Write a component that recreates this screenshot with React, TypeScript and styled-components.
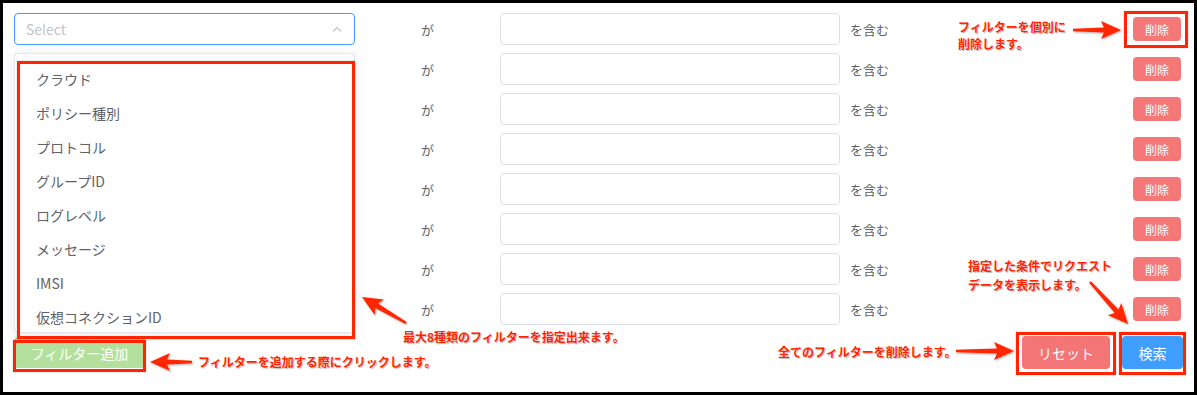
import React from 'react';
import styled, { createGlobalStyle } from 'styled-components';

const GlobalStyle = createGlobalStyle`
	body {
		margin: 0;
		background: #fff;
		font-family: 'Noto Sans CJK JP', 'Noto Sans', sans-serif;
	}
`;

const Frame = styled.div`
	position: relative;
	box-sizing: border-box;
	width: 1197px;
	height: 395px;
	border: 3px solid #000;
	padding: 10px 13px 0 11px;
	background: #fff;
	color: #606266;
`;

const FilterList = styled.div`
	display: flex;
	flex-direction: column;
	gap: 8px;
`;

const FilterRow = styled.div`
	display: flex;
	align-items: center;
	height: 32px;
`;

const SelectBox = styled.div<{ $focus?: boolean }>`
	box-sizing: border-box;
	width: 341px;
	height: 32px;
	display: flex;
	align-items: center;
	justify-content: space-between;
	padding: 0 12px 0 11px;
	border: 1px solid ${p => (p.$focus ? '#409eff' : '#dcdfe6')};
	border-radius: 4px;
	font-size: 14px;
	color: #c0c4cc;
`;

const Ga = styled.span`
	width: 145px;
	text-align: center;
	font-size: 13px;
	color: #606266;
`;

const TextInput = styled.div`
	box-sizing: border-box;
	width: 340px;
	height: 32px;
	border: 1px solid #dcdfe6;
	border-radius: 4px;
	background: #fff;
`;

const Contains = styled.span`
	margin-left: 10px;
	font-size: 13px;
	color: #606266;
	flex: 1;
`;

const Btn = styled.button<{ $color: string; $w: number; $h: number; $size?: number }>`
	box-sizing: border-box;
	width: ${p => p.$w}px;
	height: ${p => p.$h}px;
	border: none;
	border-radius: 4px;
	background: ${p => p.$color};
	color: #fff;
	font-family: inherit;
	font-size: ${p => p.$size || 14}px;
	padding: 0;
	cursor: pointer;
`;

const BottomBar = styled.div`
	display: flex;
	align-items: center;
	justify-content: space-between;
	margin-top: 11px;
	margin-right: -2px;
`;

const ButtonGroup = styled.div`
	display: flex;
	gap: 12px;
`;

const Dropdown = styled.ul`
	position: absolute;
	left: 11px;
	top: 50px;
	box-sizing: border-box;
	width: 341px;
	height: 280px;
	margin: 0;
	padding: 8px 0 0;
	list-style: none;
	background: #fff;
	border: 1px solid #e4e7ed;
	border-radius: 4px;
	box-shadow: 0 2px 12px rgba(0, 0, 0, 0.1);
	overflow: hidden;

	&::before,
	&::after {
		content: '';
		position: absolute;
		left: 166px;
		border: 6px solid transparent;
		border-top-width: 0;
	}
	&::before {
		top: -7px;
		border-bottom-color: #e4e7ed;
	}
	&::after {
		top: -6px;
		border-bottom-color: #fff;
	}
`;

const Option = styled.li`
	height: 34px;
	line-height: 34px;
	padding: 0 21px;
	font-size: 14px;
	color: #606266;
`;

const Highlight = styled.div<{ $l: number; $t: number; $w: number; $h: number }>`
	position: absolute;
	left: ${p => p.$l}px;
	top: ${p => p.$t}px;
	width: ${p => p.$w}px;
	height: ${p => p.$h}px;
	box-sizing: border-box;
	border: 3px solid #ff2500;
	box-shadow: 0 0 1px rgba(0, 0, 0, 0.35);
	pointer-events: none;
`;

const Note = styled.div<{ $l: number; $t: number; $lh?: number }>`
	position: absolute;
	left: ${p => p.$l}px;
	top: ${p => p.$t}px;
	white-space: pre;
	font-size: 12px;
	font-weight: 700;
	line-height: ${p => p.$lh || 17}px;
	color: #ff2500;
	text-shadow: 0 0 2px #fff, 1px 1px 1px rgba(0, 0, 0, 0.35);
	pointer-events: none;
`;

const ArrowLayer = styled.svg`
	position: absolute;
	left: -3px;
	top: -3px;
	width: 1197px;
	height: 395px;
	pointer-events: none;
	overflow: visible;
`;

function arrowPoints(x1: number, y1: number, x2: number, y2: number): string {
	const dx = x2 - x1;
	const dy = y2 - y1;
	const len = Math.hypot(dx, dy);
	const ux = dx / len;
	const uy = dy / len;
	const nx = -uy;
	const ny = ux;
	const head = 17;
	const bx = x2 - ux * head;
	const by = y2 - uy * head;
	const pts = [
		[x1 + nx * 1.2, y1 + ny * 1.2],
		[bx + nx * 2.6, by + ny * 2.6],
		[bx + nx * 9 - ux * 3, by + ny * 9 - uy * 3],
		[x2, y2],
		[bx - nx * 9 - ux * 3, by - ny * 9 - uy * 3],
		[bx - nx * 2.6, by - ny * 2.6],
		[x1 - nx * 1.2, y1 - ny * 1.2],
	];
	return pts.map(p => p.map(v => v.toFixed(1)).join(',')).join(' ');
}

const arrows: [number, number, number, number][] = [
	[192, 362, 150, 362],
	[406, 323, 362, 297],
	[1073, 30, 1121, 30],
	[956, 351, 1014, 351],
	[1090, 282, 1128, 324],
];

const options = [
	'クラウド',
	'ポリシー種別',
	'プロトコル',
	'グループID',
	'ログレベル',
	'メッセージ',
	'IMSI',
	'仮想コネクションID',
];

function Chevron(): JSX.Element {
	return (
		<svg width="10" height="6" viewBox="0 0 10 6">
			<polyline points="1,5.5 5,1.5 9,5.5" fill="none" stroke="#c0c4cc" strokeWidth="1.2" />
		</svg>
	);
}

export default function App(): JSX.Element {
	return (
		<>
			<GlobalStyle />
			<Frame>
				<FilterList>
					{Array.from({ length: 8 }).map((_, i) => (
						<FilterRow key={i}>
							{/* 2行目以降のセレクトはドロップダウンの下に隠れる */}
							<SelectBox $focus={i === 0}>
								{i === 0 ? 'Select' : ''}
								<Chevron />
							</SelectBox>
							<Ga>が</Ga>
							<TextInput />
							<Contains>を含む</Contains>
							<Btn $color="#f47878" $w={48} $h={24} $size={12}>
								削除
							</Btn>
						</FilterRow>
					))}
				</FilterList>

				<BottomBar>
					<Btn $color="#b3e19d" $w={131} $h={31}>
						フィルター追加
					</Btn>
					<ButtonGroup>
						<Btn $color="#f47575" $w={88} $h={33}>
							リセット
						</Btn>
						<Btn $color="#409eff" $w={61} $h={33}>
							検索
						</Btn>
					</ButtonGroup>
				</BottomBar>

				<Dropdown>
					{options.map(o => (
						<Option key={o}>{o}</Option>
					))}
				</Dropdown>

				{/* 説明用の赤枠・矢印・注釈 */}
				<Highlight $l={14} $t={58} $w={338} $h={278} />
				<Highlight $l={10} $t={337} $w={133} $h={32} />
				<Highlight $l={1121} $t={8} $w={64} $h={37} />
				<Highlight $l={1013} $t={329} $w={100} $h={43} />
				<Highlight $l={1116} $t={329} $w={67} $h={43} />

				<ArrowLayer viewBox="0 0 1197 395">
					<defs>
						<filter id="glow" x="-20%" y="-50%" width="140%" height="200%">
							<feDropShadow dx="1" dy="1" stdDeviation="0.8" floodColor="#000" floodOpacity="0.35" />
						</filter>
					</defs>
					{arrows.map(([a, b, c, d], i) => (
						<polygon key={i} points={arrowPoints(a, b, c, d)} fill="#ff2500" filter="url(#glow)" />
					))}
				</ArrowLayer>

				<Note $l={955} $t={15}>{'フィルターを個別に\n削除します。'}</Note>
				<Note $l={195} $t={350}>フィルターを追加する際にクリックします。</Note>
				<Note $l={400} $t={325}>最大8種類のフィルターを指定出来ます。</Note>
				<Note $l={775} $t={340}>全てのフィルターを削除します。</Note>
				<Note $l={965} $t={253} $lh={19}>{'指定した条件でリクエスト\nデータを表示します。'}</Note>
			</Frame>
		</>
	);
}
